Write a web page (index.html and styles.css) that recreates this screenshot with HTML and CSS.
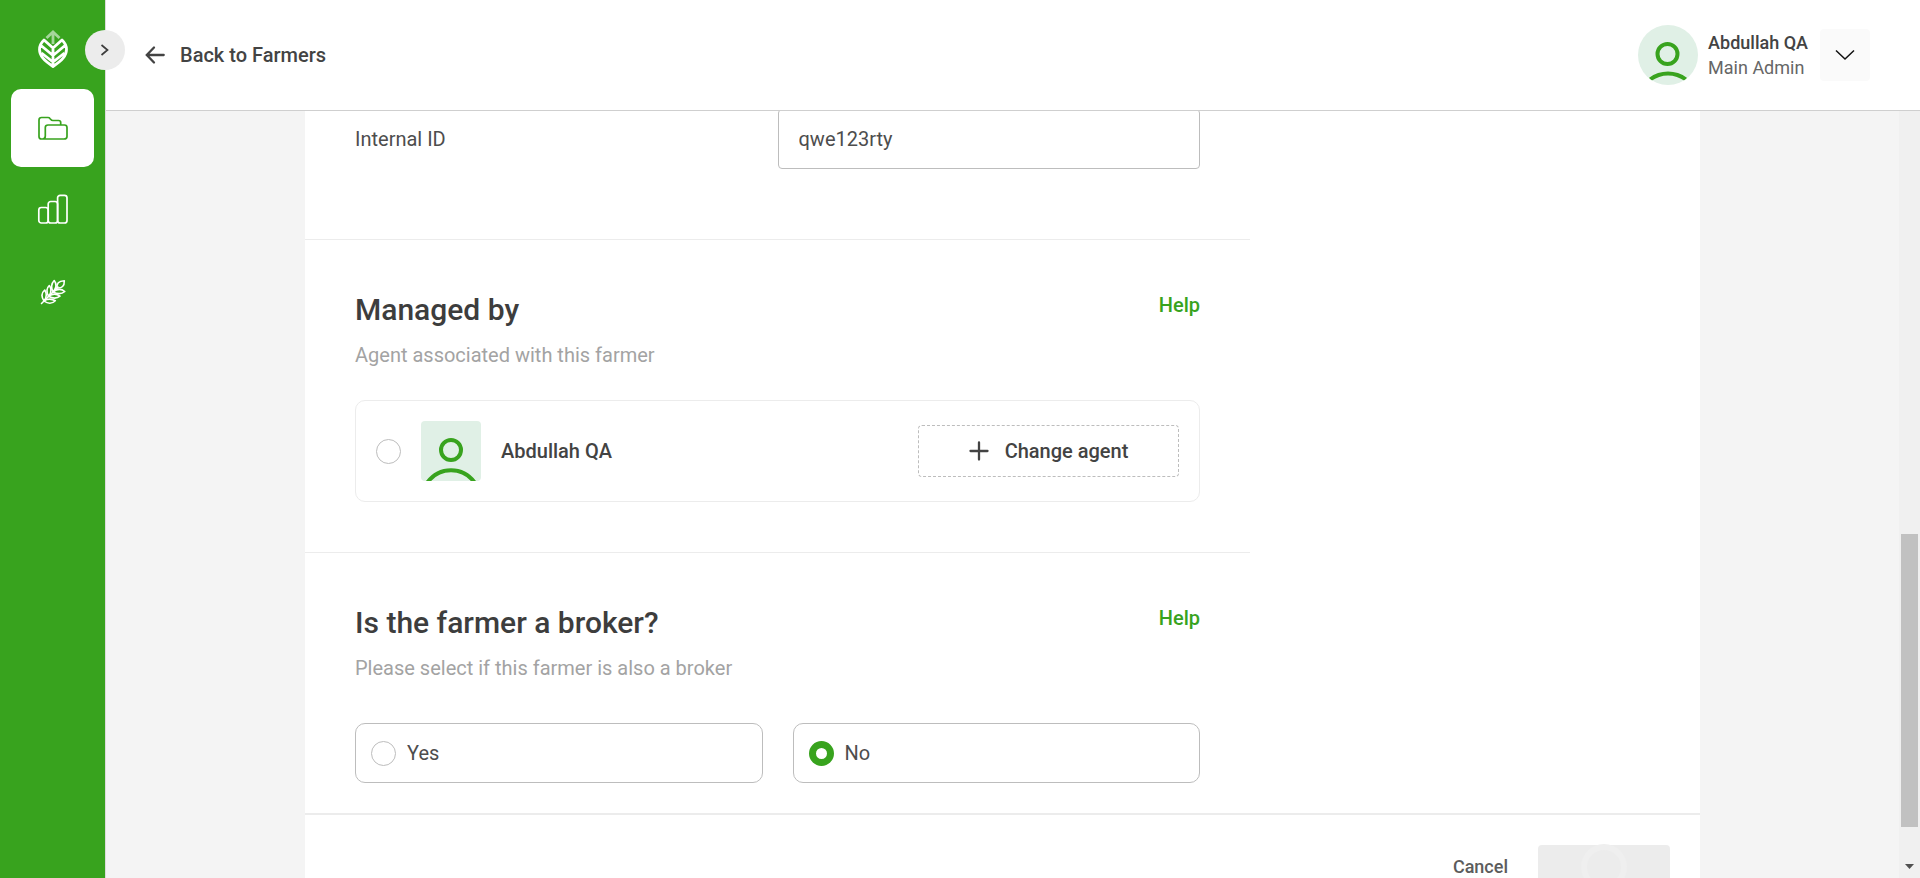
FILE: index.html
```html
<!DOCTYPE html>
<html lang="en">
<head>
<meta charset="utf-8">
<title>Farmers</title>
<meta name="viewport" content="width=device-width, initial-scale=1">
<link rel="stylesheet" href="styles.css">
</head>
<body>
<div class="app">
  <aside class="sidebar">
    <a href="#" class="logo" aria-label="Home">
      <svg width="30" height="40" viewBox="0 0 30 40" fill="none">
        <path d="M15 15V2.500M8.500 9 15 3 21.500 9" stroke="#a5d69b" stroke-width="2.800"/>
        <path d="M15 17v21M15 37.500C6 31.500 1.600 27 1.500 20.500 1.500 16.500 3.300 13.500 6 11L15 19 24 11C26.700 13.500 28.500 16.500 28.500 20.500 28.400 27 24 31.500 15 37.500ZM3 16.500 15 26.500 27 16.500M3.500 24 15 33 26.500 24" stroke="#fff" stroke-width="2.800" stroke-linejoin="round"/>
      </svg>
    </a>
    <nav class="nav" aria-label="Main">
      <a href="#" class="nav-item nav-item-active" aria-label="Records">
        <svg width="32" height="32" viewBox="0 0 32 32" fill="none" stroke="currentColor" stroke-width="1.700" stroke-linejoin="round" stroke-linecap="round">
          <path d="M23.700 12.500V10.500Q23.700 8.500 21.500 8.500H16Q14.500 8.500 13.600 7.300L12.900 6.400Q12.300 5.500 11 5.500H4.500Q2 5.500 2 8V24.500Q2 27 4.500 27H27Q30 27 30 24.500V15.500Q30 13 27.500 13H11Q8.300 13 8.300 15.500V24Q8.300 27 5.500 27"/>
        </svg>
      </a>
      <a href="#" class="nav-item" aria-label="Reports">
        <svg width="32" height="32" viewBox="0 0 32 32" fill="none" stroke="currentColor" stroke-width="1.700">
          <rect x="1.800" y="13.500" width="9.400" height="15.500" rx="2.500"/>
          <rect x="11.200" y="7.500" width="9.400" height="21.500" rx="2.500"/>
          <rect x="20.600" y="1.300" width="9.400" height="27.700" rx="2.500"/>
        </svg>
      </a>
      <a href="#" class="nav-item" aria-label="Crops">
        <svg width="26" height="26" viewBox="0 0 26 26" fill="none" stroke="currentColor" stroke-width="1.600" stroke-linejoin="round" stroke-linecap="round">
          <path d="M1.500 24.500 18 8"/>
          <path d="M17 9C16.500 4.500 18.500 2 24.300 1.700 24.500 7 22 9.500 17 9Z"/>
          <path d="M13 13C10.700 8 10.800 5 14.200 1.500 17 5 16.500 8.500 13.500 12.500"/>
          <path d="M8.500 17.300C6 12.500 6 9.500 9.300 6.500 12 10 11.700 13 9 16.800"/>
          <path d="M4 22C1 17.500 1.200 14 4.700 11 7.300 15 6.800 18 4.300 21.500"/>
          <path d="M13.500 12.500C17.500 9.800 21.500 9.800 24.800 12.500 21.500 15.300 17.500 15.300 13 13"/>
          <path d="M9 16.900C12.700 14.500 16.500 14.500 20 17.200 16.700 19.800 12.700 19.600 8.500 17.300"/>
          <path d="M4.300 21.600C8 19.500 11.500 19.500 15.300 21.700 12 25 8 24.800 4 22.200"/>
        </svg>
      </a>
    </nav>
    <button class="toggle" type="button" aria-label="Expand menu">
      <svg width="12" height="14" viewBox="0 0 12 14" fill="none" stroke="#3d3d3d" stroke-width="1.700"><path d="M2.500 2 8.500 7 2.500 12"/></svg>
    </button>
  </aside>

  <div class="main">
    <header class="header">
      <a href="#" class="back">
        <svg width="20" height="20" viewBox="0 0 20 20" fill="none" stroke="currentColor" stroke-width="2.300" stroke-linecap="round"><path d="M18.700 10H2M9 2.500 1.800 10 9 17.500"/></svg>
        <span>Back to Farmers</span>
      </a>
      <div class="user">
        <svg class="avatar avatar-round" width="60" height="60" viewBox="0 0 60 60" fill="none" stroke="#38a31e" stroke-width="4">
          <circle cx="29.500" cy="29" r="10"/><path d="M12 54.500C23 46.500 37 46.500 48 54.500"/>
        </svg>
        <div class="user-text">
          <span class="user-name">Abdullah QA</span>
          <span class="user-role">Main Admin</span>
        </div>
        <button class="user-menu" type="button" aria-label="Account menu">
          <svg width="20" height="12" viewBox="0 0 20 12" fill="none" stroke="#111" stroke-width="1.500"><path d="M1 1.500 10 10 19 1.500"/></svg>
        </button>
      </div>
    </header>

    <div class="viewport">
      <main class="content">
        <form class="panel">
          <div class="sections">
            <div class="field">
              <label for="internal-id">Internal ID</label>
              <input class="text-input" id="internal-id" type="text" value="qwe123rty">
            </div>

            <section class="section">
              <div class="section-head">
                <div>
                  <h2>Managed by</h2>
                  <p>Agent associated with this farmer</p>
                </div>
                <a href="#" class="help">Help</a>
              </div>
              <div class="agent">
                <input class="radio" type="radio" name="agent" id="agent">
                <svg class="avatar" width="60" height="60" viewBox="0 0 60 60" fill="none" stroke="#38a31e" stroke-width="4">
                  <circle cx="30" cy="29" r="10"/><path d="M6 62C18 45 42 45 54 62"/>
                </svg>
                <label class="agent-name" for="agent">Abdullah QA</label>
                <button class="change" type="button">
                  <svg width="20" height="20" viewBox="0 0 20 20" stroke="currentColor" stroke-width="2.300" stroke-linecap="round"><path d="M10 1.500V18.500M1.500 10H18.500"/></svg>
                  <span>Change agent</span>
                </button>
              </div>
            </section>

            <section class="section section-last">
              <div class="section-head">
                <div>
                  <h2>Is the farmer a broker?</h2>
                  <p>Please select if this farmer is also a broker</p>
                </div>
                <a href="#" class="help">Help</a>
              </div>
              <div class="options">
                <label class="option"><input class="radio" type="radio" name="broker"><span>Yes</span></label>
                <label class="option"><input class="radio" type="radio" name="broker" checked><span>No</span></label>
              </div>
            </section>
          </div>
          <footer class="actions">
            <button class="cancel" type="button">Cancel</button>
            <button class="save" type="submit" disabled aria-label="Saving"><span class="spinner"></span></button>
          </footer>
        </form>
      </main>
      <div class="scrollbar" aria-hidden="true">
        <div class="scroll-thumb"></div>
        <svg class="scroll-arrow" width="9" height="5" viewBox="0 0 9 5" fill="#505050"><path d="M0 0H9L4.500 5Z"/></svg>
      </div>
    </div>
  </div>
</div>
</body>
</html>
```

FILE: styles.css
```css
* { box-sizing: border-box; }

body {
  margin: 0;
  font-family: Roboto, "Liberation Sans", sans-serif;
  font-size: 20px;
  line-height: 24px;
  color: #434343;
}

button, input { font: inherit; color: inherit; margin: 0; }
button { border: 0; padding: 0; background: none; cursor: pointer; }
a { color: inherit; text-decoration: none; }
svg { display: block; flex: none; }

.app { display: flex; height: 100vh; overflow: hidden; }

.sidebar {
  position: relative;
  z-index: 2;
  flex: none;
  width: 106px;
  padding: 29px 11px;
  background: #38a31e;
  border-right: 1px solid #dcdcdc;
}
.logo { display: flex; justify-content: center; margin-bottom: 20px; }
.nav { display: flex; flex-direction: column; gap: 4px; }
.nav-item {
  display: flex;
  align-items: center;
  justify-content: center;
  height: 78px;
  border-radius: 10px;
  color: #fff;
}
.nav-item-active { background: #fff; color: #38a31e; }
.toggle {
  position: absolute;
  top: 30px;
  right: -20px;
  display: flex;
  align-items: center;
  justify-content: center;
  width: 40px;
  height: 40px;
  border-radius: 50%;
  background: #ececec;
}

.main { flex: 1; min-width: 0; display: flex; flex-direction: column; }

.header {
  position: relative;
  z-index: 1;
  flex: none;
  display: flex;
  align-items: center;
  justify-content: space-between;
  height: 111px;
  padding: 0 50px 0 39px;
  background: #fff;
  border-bottom: 1px solid #cfcfcf;
}
.back { display: flex; align-items: center; gap: 15px; font-weight: 500; }
.user { display: flex; align-items: center; }
.avatar { background: #e0f0e6; border-radius: 4px; }
.avatar-round { border-radius: 50%; }
.user-text {
  display: flex;
  flex-direction: column;
  margin: 0 12px 0 10px;
  font-size: 18px;
  line-height: 25px;
}
.user-name { font-weight: 500; }
.user-role { color: #666; }
.user-menu {
  display: flex;
  align-items: center;
  justify-content: center;
  width: 50px;
  height: 52px;
  border-radius: 4px;
  background: #fafafa;
}

.viewport { flex: 1; min-height: 0; display: flex; background: #f4f4f4; }
.content { flex: 1; min-width: 0; padding: 0 199px; }
.panel { margin-top: -2px; background: #fff; }
.sections { margin-right: 450px; }

.field {
  display: grid;
  grid-template-columns: 1fr 1fr;
  align-items: center;
  padding: 0 50px 70px;
  color: #4d4d4d;
}
.text-input {
  width: 100%;
  height: 60px;
  padding: 0 20px;
  border: 1px solid #bdbdbd;
  border-radius: 4px;
  background: #fff;
}

.section { padding: 50px; border-top: 1px solid #ececec; }
.section-last { padding-bottom: 30px; }
.section-head { display: flex; justify-content: space-between; }
.section h2 { margin: 0; font-size: 30px; line-height: 40px; font-weight: 500; color: #3d3d3d; }
.section p { margin: 13px 0 0; color: #a3a3a3; }
.help { margin-top: 3px; color: #38a31e; font-weight: 500; }

.agent {
  display: flex;
  align-items: center;
  gap: 20px;
  margin-top: 33px;
  padding: 20px;
  border: 1px solid #ececec;
  border-radius: 10px;
}
.agent-name { font-weight: 500; }
.change {
  display: flex;
  align-items: center;
  justify-content: center;
  gap: 16px;
  width: 261px;
  height: 52px;
  margin-left: auto;
  border: 1px dashed #bdbdbd;
  border-radius: 4px;
  font-weight: 500;
}

.radio {
  appearance: none;
  flex: none;
  width: 25px;
  height: 25px;
  border: 1px solid #bdbdbd;
  border-radius: 50%;
  background: #fff;
}
.radio:checked { border: 7px solid #38a31e; }

.options { display: grid; grid-template-columns: 1fr 1fr; gap: 30px; margin-top: 43px; }
.option {
  display: flex;
  align-items: center;
  gap: 11px;
  height: 60px;
  padding: 0 15px;
  border: 1px solid #bdbdbd;
  border-radius: 10px;
  color: #4d4d4d;
}

.actions {
  display: flex;
  justify-content: flex-end;
  align-items: center;
  gap: 30px;
  padding: 30px;
  border-top: 2px solid #ececec;
}
.cancel { font-size: 18px; font-weight: 500; color: #5c5c5c; }
.save {
  display: flex;
  align-items: center;
  justify-content: center;
  width: 132px;
  height: 44px;
  border-radius: 4px;
  background: #ececec;
}
.spinner {
  flex: none;
  width: 46px;
  height: 46px;
  border: 6px solid #efefef;
  border-radius: 50%;
}

.scrollbar {
  flex: none;
  display: grid;
  grid-template-rows: 423fr 293fr 51fr;
  width: 21px;
  padding: 0 2px;
  background: #f0f0f0;
}
.scroll-thumb { grid-row: 2; background: #c1c1c1; }
.scroll-arrow { grid-row: 3; justify-self: center; align-self: end; margin-bottom: 9px; }
```
